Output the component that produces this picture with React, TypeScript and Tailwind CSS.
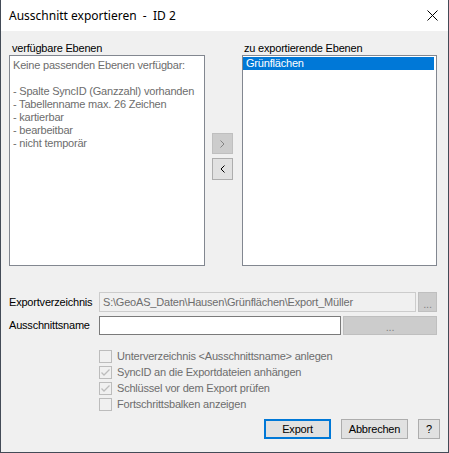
import { useState } from "react"

const font = { fontFamily: '"Liberation Sans", Arial, sans-serif' }

function Check({ checked, label }: { checked: boolean; label: string }) {
  return (
    <div className="flex items-center h-[16px]">
      <div className="w-[13px] h-[13px] border border-[#bcbcbc] flex items-center justify-center">
        {checked && (
          <svg width="11" height="11" viewBox="0 0 11 11">
            <path d="M1.5 5.5 L4 8 L9.5 2.5" fill="none" stroke="#bcbcbc" strokeWidth="1.3" />
          </svg>
        )}
      </div>
      <span className="ml-[5px] text-[#6d6d6d]">{label}</span>
    </div>
  )
}

export default function App() {
  const [selected] = useState("Grünflächen")

  return (
    <div className="w-[449px] h-[453px] flex flex-col bg-[#f0f0f0] border-x border-b border-[#434b57] text-[11px] tracking-[-0.2px] text-black" style={font}>
      <div className="h-[31px] bg-white flex items-center justify-between pl-[8px] pr-[10px] tracking-normal">
        <span className="text-[12px] whitespace-pre" style={{ fontFamily: '"Noto Sans", "Open Sans", sans-serif' }}>
          Ausschnitt exportieren  -  ID 2
        </span>
        <svg width="11" height="11" viewBox="0 0 11 11">
          <path d="M0.5 0.5 L10.5 10.5 M10.5 0.5 L0.5 10.5" stroke="#000" strokeWidth="1" />
        </svg>
      </div>

      <div className="flex flex-col pl-[8px]">
        <div className="flex mt-[10px]">
          <div className="flex flex-col w-[196px]">
            <div className="h-[14px] leading-[14px] pl-[3px]">verfügbare Ebenen</div>
            <div className="h-[211px] bg-white border border-[#828790] pl-[3px] pt-[3px] leading-[13px] text-[#6d6d6d]">
              <div>Keine passenden Ebenen verfügbar:</div>
              <div className="h-[13px]"></div>
              <div>- Spalte SyncID (Ganzzahl) vorhanden</div>
              <div>- Tabellenname max. 26 Zeichen</div>
              <div>- kartierbar</div>
              <div>- bearbeitbar</div>
              <div>- nicht temporär</div>
            </div>
          </div>

          <div className="w-[37px] flex flex-col pt-[92px] pl-[7px] gap-[4px]">
            <button className="w-[21px] h-[21px] bg-[#cccccc] border border-[#bfbfbf] flex items-center justify-center">
              <svg width="5" height="8" viewBox="0 0 5 8">
                <path d="M0.5 0.5 L4 4 L0.5 7.5" fill="none" stroke="#838383" strokeWidth="1" />
              </svg>
            </button>
            <button className="w-[21px] h-[22px] bg-[#e1e1e1] border border-[#adadad] flex items-center justify-center">
              <svg width="5" height="8" viewBox="0 0 5 8">
                <path d="M4.5 0.5 L1 4 L4.5 7.5" fill="none" stroke="#000" strokeWidth="1" />
              </svg>
            </button>
          </div>

          <div className="flex flex-col w-[195px]">
            <div className="h-[14px] leading-[14px] pl-[2px]">zu exportierende Ebenen</div>
            <div className="h-[211px] bg-white border border-[#828790] pt-[1px] pr-[2px]">
              <div className="h-[13px] leading-[13px] bg-[#0078d7] text-white pl-[3px]">{selected}</div>
            </div>
          </div>
        </div>

        <div className="flex items-center mt-[26px] h-[20px]">
          <span className="w-[90px]">Exportverzeichnis</span>
          <div className="w-[317px] h-[20px] border border-[#cccccc] bg-[#f0f0f0] text-[#6d6d6d] flex items-center pl-[3px]">
            S:\GeoAS_Daten\Hausen\Grünflächen\Export_Müller
          </div>
          <div className="ml-[2px] w-[19px] h-[20px] bg-[#cccccc] border border-[#bfbfbf] text-[#838383] flex items-end justify-center leading-[14px]">...</div>
        </div>

        <div className="flex items-center mt-[4px] h-[19px]">
          <span className="w-[90px]">Ausschnittsname</span>
          <div className="w-[242px] h-[19px] border border-[#7a7a7a] bg-white"></div>
          <div className="ml-[2px] w-[94px] h-[19px] bg-[#cccccc] border border-[#bfbfbf] text-[#838383] flex items-end justify-center leading-[14px]">...</div>
        </div>

        <div className="flex flex-col mt-[13px] pl-[90px]">
          <Check checked={false} label="Unterverzeichnis <Ausschnittsname> anlegen" />
          <Check checked={true} label="SyncID an die Exportdateien anhängen" />
          <Check checked={true} label="Schlüssel vor dem Export prüfen" />
          <Check checked={false} label="Fortschrittsbalken anzeigen" />
        </div>

        <div className="flex justify-end mt-[7px] pr-[8px] gap-[10px]">
          <button className="w-[67px] h-[20px] bg-[#e1e1e1] border-2 border-[#0078d7] flex items-center justify-center">Export</button>
          <button className="w-[67px] h-[20px] bg-[#e1e1e1] border border-[#adadad] flex items-center justify-center">Abbrechen</button>
          <button className="w-[22px] h-[20px] bg-[#e1e1e1] border border-[#adadad] flex items-center justify-center">?</button>
        </div>
      </div>
    </div>
  )
}
